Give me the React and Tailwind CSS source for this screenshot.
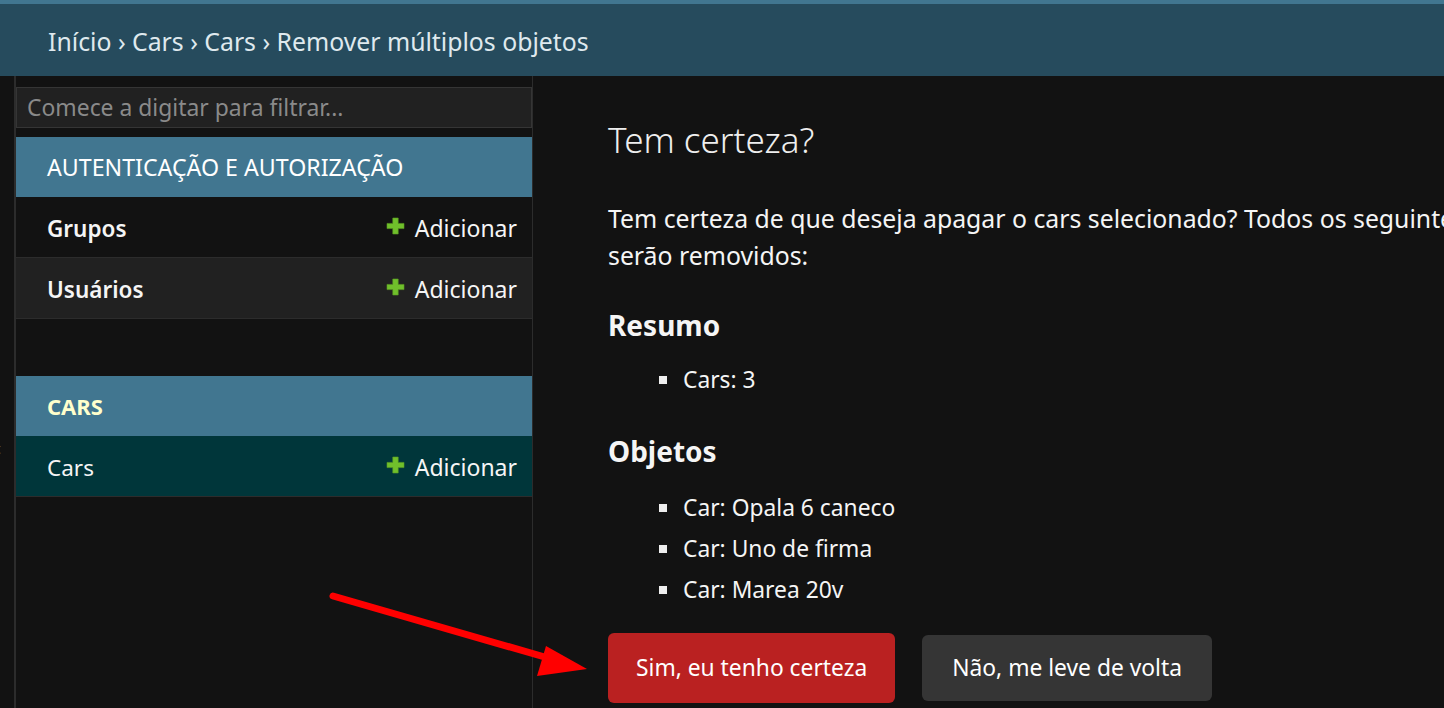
import { useState } from "react";

function PlusIcon() {
  return (
    <svg width="19" height="18" viewBox="0 0 19 18" className="shrink-0">
      <path
        d="M6.8 1h5.4v5.4h5.8v5.2h-5.8v5.4h-5.4v-5.4h-5.8v-5.2h5.8z"
        fill="#70bf2b"
        stroke="#5c9e22"
        strokeWidth="0.6"
        strokeLinejoin="round"
      />
    </svg>
  );
}

function ModelRow({ name, bold, selected, alt }) {
  const bg = selected ? "bg-[#00363a]" : alt ? "bg-[#212121]" : "bg-[#121212]";
  return (
    <div className={`flex h-[61px] items-center justify-between border-b border-[#2c2c2c] pl-[31px] pr-[15px] pt-[3px] ${bg}`}>
      <span className={`text-[22.5px] text-[#f5f5f5] ${bold ? "font-semibold" : ""}`}>{name}</span>
      <span className="flex items-center gap-[10px] text-[23px] text-[#f5f5f5]">
        <span className="-mt-[6px]">
          <PlusIcon />
        </span>
        Adicionar
      </span>
    </div>
  );
}

function AppSection({ title, current, children }) {
  return (
    <div>
      <div
        className={`flex h-[60px] items-center whitespace-nowrap bg-[#417690] pl-[31px] ${
          current ? "text-[22px] font-bold text-[#ffffcc]" : "text-[23.2px] text-white"
        }`}
      >
        {title}
      </div>
      {children}
    </div>
  );
}

export default function App() {
  const [filter, setFilter] = useState("");
  const objects = ["Car: Opala 6 caneco", "Car: Uno de firma", "Car: Marea 20v"];

  return (
    <div
      className="relative flex h-[708px] w-[1444px] flex-col overflow-hidden bg-[#121212] text-[#f5f5f5]"
      style={{ fontFamily: '"Noto Sans", "Open Sans", sans-serif' }}
    >
      <div className="h-[4px] shrink-0 bg-[#417690]" />
      <div className="flex h-[72px] shrink-0 items-center bg-[#264b5d] pl-[48px] pt-[3px] text-[24.8px] text-[#dfe9ee]">
        Início › Cars › Cars › Remover múltiplos objetos
      </div>

      <div className="flex min-w-0 flex-1">
        <div className="relative w-[14px] shrink-0">
          <span className="absolute left-[-9px] top-[362px] text-[20px] leading-none text-[#79aec8]">«</span>
        </div>

        <nav className="w-[519px] shrink-0 border-l-2 border-r border-[#2c2c2c] pt-[11px]">
          <input
            value={filter}
            onChange={(e) => setFilter(e.target.value)}
            placeholder="Comece a digitar para filtrar..."
            className="box-border h-[41px] w-full border border-[#353535] bg-[#212121] px-[10px] text-[22.9px] text-[#f5f5f5] outline-none placeholder:text-[#8a8a8a]"
          />
          <div className="mt-[9px]">
            <AppSection title="AUTENTICAÇÃO E AUTORIZAÇÃO">
              <ModelRow name="Grupos" bold />
              <ModelRow name="Usuários" bold alt />
            </AppSection>
          </div>
          <div className="mt-[57px]">
            <AppSection title="CARS" current>
              <ModelRow name="Cars" selected />
            </AppSection>
          </div>
        </nav>

        <main className="min-w-0 flex-1 overflow-hidden pl-[75px] pt-[40px]">
          <h1 className="text-[35px] font-light leading-[48px] text-[#eeeeee]">Tem certeza?</h1>
          <p className="mt-[36px] whitespace-nowrap text-[24.8px] leading-[37px]">
            Tem certeza de que deseja apagar o cars selecionado? Todos os seguintes objetos e seus itens relacionados
            <br />
            serão removidos:
          </p>

          <h2 className="mt-[31px] text-[28px] font-bold leading-[40px]">Resumo</h2>
          <ul className="mt-[14px] pl-[51px]">
            <li className="flex items-center gap-[16px] text-[22.8px] leading-[41px]">
              <span className="h-[8px] w-[8px] bg-[#eeeeee]" />
              Cars: 3
            </li>
          </ul>

          <h2 className="mt-[31px] text-[28px] font-bold leading-[40px]">Objetos</h2>
          <ul className="mt-[16px] pl-[51px]">
            {objects.map((o) => (
              <li key={o} className="flex items-center gap-[16px] text-[22.8px] leading-[41px]">
                <span className="h-[8px] w-[8px] bg-[#eeeeee]" />
                {o}
              </li>
            ))}
          </ul>

          <div className="mt-[23px] flex items-center gap-[27px]">
            <button
              type="button"
              className="h-[70px] rounded-[6px] bg-[#ba2121] px-[28px] text-[22.8px] text-white"
            >
              Sim, eu tenho certeza
            </button>
            <button
              type="button"
              className="h-[66px] rounded-[6px] bg-[#353535] px-[30px] text-[22.8px] text-white"
            >
              Não, me leve de volta
            </button>
          </div>
        </main>
      </div>

      <svg className="pointer-events-none absolute left-0 top-0" width="1444" height="708">
        <line x1="333" y1="596" x2="555" y2="660" stroke="#ff0000" strokeWidth="7" strokeLinecap="round" />
        <polygon points="587,669 546,646 537,676" fill="#ff0000" />
      </svg>
    </div>
  );
}
